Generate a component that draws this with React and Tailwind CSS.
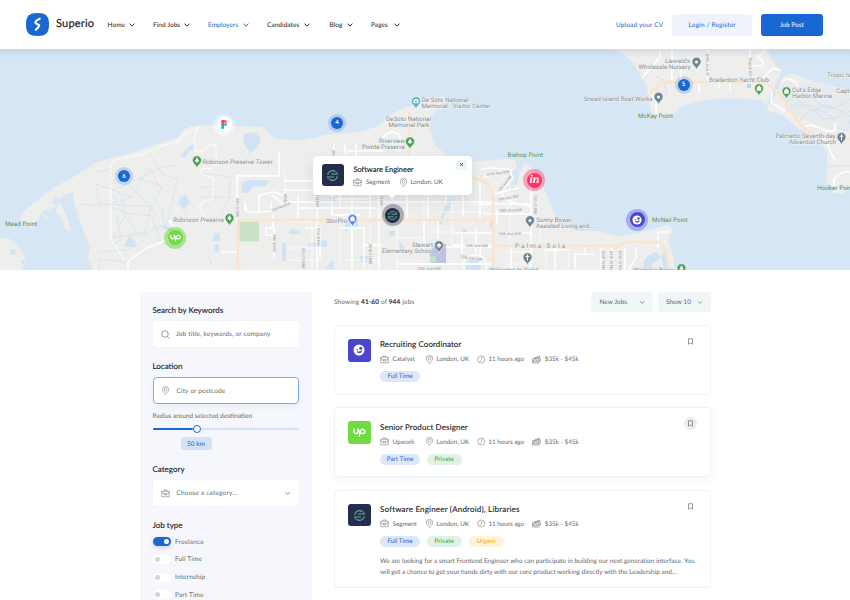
import React from "react";

const pinPath = "M0 2.8C-.6 -.8 -4.500 -1.800 -4.500 -5.200A4.500 4.500 0 0 1 4.500 -5.200C4.500 -1.800 .6 -.8 0 2.800Z";

const white = [
  "M237 175V221M237 176H279V152", "M245 211V202L247 212Q258 213 271 211V202M259 211V195L274 192L285 196M272 195L285 206",
  "M273 215V228H266V235H274M274 228V258M222 252H237", "M128 270V261L147 248L169 239L176 230L169 221H230",
  "M285 181H318M285 190H380M285 202H492M300 208H376M317 181V270M298 210V215M298 196V219M352 195V270M370 190V218M379 195V270M407 190V218M428 190V218M446 181V204M463 181V215M480 181V218",
  "M320 228V258M306 228H318M340 228H364V267M363 245H382M332 190V215H360M335 199H368M340 190V206",
  "M334 144V151M345 144V153M356 144V157M383 138Q390 128 400 135V152M347 151H383",
  "M480 170Q487 166 512 170M485 177Q505 172 510 171L513 178L502 190Q500 203 530 206M492 195Q508 190 518 188M480 204H531M455 233H493M483 214H531M493 210V233M497 224V210M453 245H494M505 233H531M531 176V270M511 245V270M476 229V252M462 236V253M430 247H493M410 264H492",
  "M465 270Q459 259 473 255Q489 254 486 270M397 264H480V248M438 220V238M424 219V248",
  "M642 78L660 57V51M648 92L656 100V116M672 50V80M681 60V80M708 50V82M750 48V81M719 82V88M730 80V91M699 82V93M752 66H762Q766 61 757 57L766 51M760 81L773 68L780 70M772 92L771 102L785 111M782 82Q790 74 798 86M803 127L811 125L827 131H835V123M824 137L835 161M834 188V179Q841 170 850 172",
  "M658 248V232H668M585 247V254H575M594 254H575V270M601 248V270M612 248V270M625 248V270M636 248V258L628 270M555 248V270M545 250H570",
];
const thinRoads = [
  "M285 172V210M289 222H312V270M340 225V265M370 225V270M397 225V270M424 178V214M452 180V245M510 180V245M540 220V242M546 250V270M569 252V270M620 252V270",
  "M288 248H318M288 260H320M395 238H422M395 250H420M430 232H455M440 205H490M440 212H490M345 260H380M505 252H531M505 264H531",
];

const labels = [
  ["Robinson Preserve Tower", 202.5, 164.2, 70, 1], ["Robinson Preserve", 173, 222.2, 51, 1],
  ["De Soto National", 421.5, 102, 47], ["Memorial - Visitor Center", 421.5, 108.2, 69],
  ["DeSoto National", 386, 121, 45], ["Memorial Park", 388.5, 127.2, 41],
  ["Riverview", 379, 142.5, 26], ["Pointe Preserve", 362, 148.7, 43],
  ["StorPro", 326, 223, 21], ["Stewart", 412, 246.5, 21], ["Elementary School", 382, 252.8, 51],
  ["Sunny Bower", 536, 221.5, 36], ["Assisted Living and...", 536, 227.8, 58],
  ["Welcome to Solid", 489, 272, 49],
  ["Liewald's", 665, 63, 25], ["Wholesale Nursery", 638.5, 69.2, 52],
  ["Snead Island Boat Works", 583.5, 101, 69], ["Bradenton Yacht Club", 709, 81.8, 60],
  ["Cut's Edge", 792, 92, 29], ["Harbor Marina", 792, 98.2, 40],
  ["Palmetto Seventh-day", 775.5, 138, 60], ["Adventist Church", 789, 144.2, 47],
  ["Tropic Island", 827, 77.2, 36], ["Captain's", 836, 93.2, 26], ["Warner's Bayou", 633, 271.8, 43],
];
const points = [
  ["Mead Point", 5, 225.5, 32], ["Bishop Point", 507.5, 157, 35.5], ["McKay Point", 638, 117.5, 35],
  ["McNeil Point", 652, 222, 35.5], ["Hooker Point", 817, 189.5, 37],
];
const streets = [
  ["99th St NW", 236, 198, 90, 19], ["99th St NW", 273, 234, 90, 18], ["10th Ave NW", 272, 212, -22, 20],
  ["21st Ave NW", 487, 176, -8, 23], ["19th Ave NW", 498, 201, -10, 21], ["18th Ave NW", 499, 212, -2, 23],
  ["16th Ave NW", 498, 235, 0, 23], ["15th Ave NW", 465, 247, 0, 23], ["12th Ave NW", 417, 270, 0, 24],
  ["15th Ave NW", 460, 258, 8, 22], ["14th Ave NW", 500, 192, -52, 19], ["75th St NW", 534, 195, 90, 19],
  ["69th Ave W", 706, 54, 90, 22], ["Tarpon Rd", 749, 57, 90, 19], ["65th St NW", 602, 251, 90, 21],
  ["64th St NW", 610, 251, 90, 21], ["63rd St NW", 619, 251, 90, 21], ["91st Ct NW", 317, 228, 90, 18],
  ["92nd St NW", 302, 248, 90, 20], ["86th Ct NW", 369, 244, 90, 20], ["83rd Ct NW", 380, 188, 90, 18],
  ["91st Ct NW", 316, 189, 90, 18], ["88th St", 284, 194, 90, 13], ["89th Ct", 332, 150, 90, 10],
];

function Pin({ x, y, c = "#6f8492", kind = "dot" }) {
  return (
    <g transform={`translate(${x} ${y})`}>
      <path d={pinPath} fill={c} stroke="#fff" strokeWidth=".5" />
      {kind === "dot" && <circle cy="-5" r="1.6" fill="#fff" />}
      {kind === "tree" && <path d="M0 -8.2L2 -4.4H.5V-2.8H-.5V-4.4H-2ZM-1.6 -5.6H1.6L2.2 -4H-2.2Z" fill="#fff" />}
      {kind === "cross" && <path d="M0 -8V-2M-1.8 -6H1.8" stroke="#fff" strokeWidth="1" />}
      {kind === "bag" && <path d="M-2 -6.2H2V-3H-2ZM-1 -6.2V-7Q0 -8.2 1 -7V-6.2" fill="#fff" stroke="#fff" strokeWidth=".5" />}
      {kind === "school" && <path d="M-2.8 -5.5L0 -7.2L2.8 -5.5L0 -3.9ZM-1.6 -4.4V-3.4L0 -2.6L1.6 -3.4V-4.4" fill="#fff" />}
      {kind === "camera" && <><path d="M-2.5 -6.8H-1L-.5 -7.6H.5L1 -6.8H2.5V-3.2H-2.5Z" fill="#fff" /><circle cy="-5" r="1" fill={c} /></>}
    </g>
  );
}

function MapArt() {
  return (
    <svg className="block h-full w-full" viewBox="0 49 850 221" fill="none" fontFamily="Roboto, sans-serif">
      <defs>
        <linearGradient id="topShade" x1="0" y1="0" x2="0" y2="1">
          <stop offset="0" stopColor="#7a94b4" stopOpacity=".2" />
          <stop offset="1" stopColor="#7a94b4" stopOpacity="0" />
        </linearGradient>
      </defs>
      <rect y="49" width="850" height="221" fill="#d6e6f4" />
      <g fill="#eeeeed">
        <path d="M93 270L88 258L90 248L82 228L78 215L74 201V193L67 193L60 199L55 197L52 203L57 206L50 209L43 211L37 221L30 229L28 222L20 221L24 211L35 202L55 187L75 176L97 162L112 158L135 152L160 143L178 137L183 130L192 126L205 125L262 127L270 134L276 139L305 140L325 135L345 133L360 132L378 126L395 112L418 103L445 96L449 98L440 108L432 115L429 128L435 145L452 160L472 162L505 159L515 160L517 167L508 176L510 186L517 184L520 172L525 163L535 171L545 191L555 215L562 226L578 231H598L618 236L638 233L668 225L673 230L668 241L673 255L675 270Z" />
        <path d="M0 238L10 239L20 248L26 261L22 270H0Z" />
        <path d="M613 48L632 61L643 78L648 91L650 108L655 120L672 115L682 106L705 100L728 98L762 100L769 111L782 115L798 128L815 138L827 151V181L833 193L842 194L850 190V90L815 82L792 73L783 77L776 94L763 112L770 96L781 73L765 48Z" />
        <path d="M59 202L67 216L71 232L64 228L63 220L56 211ZM43 213L50 221L45 219Z" />
      </g>
      <path d="M815 83L850 92V132L820 126L795 114L783 103L786 82Z" fill="#e8ebee" />
      <g fill="#d0e3f5">
        <path d="M244 134L254 132L261 138L257 148L250 153L243 143ZM180 156L192 144L195 148L188 152L185 158ZM180 197L186 195L190 203L184 209L179 203ZM129 235L136 243L135 247L124 247ZM241 184L249 180H269L266 186L252 187L249 193H242ZM215 234L220 232V241H212ZM214 244H219V252H215ZM208 255L212 263L211 265ZM159 225L173 227L177 234L169 231Z" />
        <path d="M282 243H286V261H282ZM308 243L327 240V247H308ZM345 221H358V229L352 227L345 232ZM360 256H369V262H360ZM389 231H395V236H389ZM325 268L333 260L334 270ZM291 228L300 231V234H289ZM447 200L455 197L449 211L444 215L442 225L439 224L443 211ZM466 270Q462 261 473 259Q483 260 480 270ZM462 229H467V233H462ZM398 240L405 247L401 251ZM490 222H494V228H490ZM644 270Q640 258 656 252L661 257L652 264V270ZM661 256L665 252L669 270H664ZM508 190L514 186L512 192ZM330 197H337V203H330Z" />
        <circle cx="13" cy="252" r="3" /><circle cx="23" cy="262" r="2" />
      </g>
      <path d="M655 76L663 80L667 96L657 95M790 76L779 92L784 99L798 90M785 112Q808 98 816 112T850 111M784 104Q802 86 816 101T850 99M800 120Q820 100 833 120T850 120M788 108L800 101L810 111L827 105L850 116M828 166H850" stroke="#cfe2f4" strokeWidth="1" />
      <path d="M97 172L112 169L111 189L95 184M96 188L99 203L113 205M78 204L103 206L132 197L149 167L158 184L179 205L187 214M148 151L163 175L178 179L165 230M111 207L127 213L152 216L160 242L187 252M132 197L112 190L128 184L162 167L178 165M122 195L125 215L113 238L145 232L151 205M138 178L162 186L153 207L110 204M113 194L121 211L140 236L164 225L162 209L151 193M111 184L125 181L141 197L157 216M98 252L128 250L145 240M95 259L129 262M99 270V260M200 173L230 177V197L221 214M197 187H212M197 197H230M245 149L239 158M251 153L245 160M117 216L121 239L112 246" stroke="#d3e2f0" strokeWidth=".8" />
      <g stroke="#f9f9f8" strokeWidth="1.1" strokeLinejoin="round">{thinRoads.map((d) => <path key={d} d={d} />)}</g>
      <g stroke="#fff" strokeWidth="1.5" strokeLinejoin="round" strokeLinecap="round">{white.map((d) => <path key={d} d={d} />)}</g>
      <path d="M125 261L111 240V164L115 160L143 154L161 146L178 142L185 134L198 128L194 139L195 151L203 151L208 145L216 145V165L211 169L202 168L201 174L213 178V199L202 202L199 208L207 220" stroke="#fff" strokeWidth="1.5" strokeDasharray="1.6 1.1" />
      <g stroke="#fbe4cb" strokeWidth="2.4" strokeLinejoin="round">
        <path d="M238 270V220H493M409 112V160M470 177Q493 181 493 198V270M493 246H620L625 242H660Q667 247 670 270M648 95L662 82H760Q773 84 782 98L798 121Q809 136 825 137L850 139" />
      </g>
      <path d="M239.500 222H259V241.500H239.500Z" fill="#cae2ca" />
      <path d="M430 251L436 244H446V263H430Z" fill="#bec3e3" /><path d="M430 256H436V263H430Z" fill="#bfe3c4" />
      <rect x="747" y="84" width="4" height="4" fill="#a9dfeb" />
      <g fill="#a0a0a0" fontSize="4" stroke="#eeeeed" strokeWidth=".7" paintOrder="stroke">
        {streets.map(([t, x, y, r, w], i) => <text key={i} transform={`translate(${x} ${y}) rotate(${r})`} textLength={w} lengthAdjust="spacingAndGlyphs">{t}</text>)}
      </g>
      <g fill="#878c90" fontSize="6.200" stroke="#f3f5f6" strokeWidth=".9" paintOrder="stroke">
        {labels.map(([t, x, y, w, it]) => <text key={t} x={x} y={y} textLength={w} lengthAdjust="spacingAndGlyphs" fontStyle={it ? "italic" : "normal"}>{t}</text>)}
        <text x="515" y="248" fontSize="6.500" textLength="50">Palma Sola</text>
      </g>
      <g fill="#4b8a52" fontSize="6.200" stroke="#e9f1f3" strokeWidth=".7" paintOrder="stroke">
        {points.map(([t, x, y, w]) => <text key={t} x={x} y={y} textLength={w} lengthAdjust="spacingAndGlyphs">{t}</text>)}
      </g>
      <Pin x={197} y={165.500} c="#4f9d58" kind="tree" />
      <Pin x={229.500} y={223.300} c="#4f9d58" kind="tree" />
      <Pin x={410} y={146.700} c="#4f9d58" kind="tree" />
      <Pin x={681.500} y={273.500} c="#4f9d58" kind="tree" />
      <Pin x={759} y={93.400} c="#4aa356" kind="bag" />
      <Pin x={786.500} y={96.400} c="#4aa356" kind="bag" />
      <Pin x={416} y={106.400} c="#4cb3c9" kind="camera" />
      <Pin x={352.500} y={224} c="#5a87e8" kind="bag" />
      <Pin x={439} y={250.400} kind="school" />
      <Pin x={530} y={225.500} /><Pin x={527.500} y={262.500} kind="cross" />
      <Pin x={696.500} y={67} /><Pin x={658.500} y={102} /><Pin x={841.500} y={142.200} kind="cross" />
      <rect y="49" width="850" height="9" fill="url(#topShade)" />
    </svg>
  );
}

function SegmentMark({ className }) {
  return (
    <svg className={className} viewBox="0 0 24 24" fill="none" stroke="#62b58d" strokeWidth="2" strokeLinecap="round">
      <path d="M4.500 7A9 9 0 0 1 17 4.500M19.500 17A9 9 0 0 1 7 19.500M10 9.300H21.500M2.500 14.700H14M20.500 14Q20.500 16 19.500 17M3.500 10Q3.500 8 4.500 7" />
      <circle cx="20" cy="6.500" r=".4" /><circle cx="4" cy="17.500" r=".4" />
    </svg>
  );
}

function CatalystMark({ className }) {
  return (
    <svg className={className} viewBox="0 0 24 24">
      <circle cx="12" cy="12" r="11" fill="#fff" />
      <circle cx="15.500" cy="8.500" r="3" fill="#4a44cf" /><circle cx="8.500" cy="11.500" r="1.500" fill="#4a44cf" />
      <path d="M7 14.500Q13 16.500 18.500 12Q18 18 13 18.500Q8.500 18.500 7 14.500Z" fill="#4a44cf" />
    </svg>
  );
}

function UpMark({ className }) {
  return (
    <svg className={className} viewBox="0 0 26 18" fill="none" stroke="#fff" strokeWidth="2.900" strokeLinecap="round" strokeLinejoin="round">
      <path d="M2 2V7Q2 11 6 11T10 7V2Q12 8 16 10.500M12.500 16L15 6.500Q16 2.500 19.500 2.500T24 6.800T19.500 11Q17 11 14 8" />
    </svg>
  );
}

function Chevron({ className }) {
  return <svg className={className} viewBox="0 0 8 5" fill="none" stroke="currentColor" strokeWidth="1.300" strokeLinecap="round" strokeLinejoin="round"><path d="M1 1L4 4L7 1" /></svg>;
}

function Briefcase({ className = "h-[9px] w-[9px]" }) {
  return (
    <svg className={className} viewBox="0 0 18 18" fill="none" stroke="currentColor" strokeWidth="1" strokeLinejoin="round">
      <path d="M1.500 4.500H16.500V15.500H1.500ZM6 4.500V2H12V4.500M1.500 5.500L3 9L7 10.500M16.500 5.500L15 9L11 10.500M7 9H11V12H7Z" />
    </svg>
  );
}

function Place({ className = "h-[9px] w-[9px]" }) {
  return (
    <svg className={className} viewBox="0 0 18 18" fill="none" stroke="currentColor" strokeWidth="1">
      <path d="M9 17C7.500 13.500 2.500 11.500 2.500 7A6.500 6.200 0 0 1 15.500 7C15.500 11.500 10.500 13.500 9 17Z" /><circle cx="9" cy="7" r="3" />
    </svg>
  );
}

function Clock() {
  return (
    <svg className="h-[9px] w-[9px]" viewBox="0 0 18 18" fill="none" stroke="currentColor" strokeWidth="1">
      <circle cx="8.500" cy="9" r="7" /><path d="M9.500 4V9L6.500 13" />
    </svg>
  );
}

function Money() {
  return (
    <svg className="h-[9px] w-[9px]" viewBox="0 0 18 18" fill="none" stroke="currentColor" strokeWidth="1.100">
      <path d="M1 7.500H14V16H1ZM3 7L15 2L17.500 11L14 13M5 7L13.500 4.500L14.500 7" /><circle cx="7.500" cy="11.700" r="2.300" /><path d="M3 9.500V14M12 9.500V14" />
    </svg>
  );
}

function Bookmark() {
  return <svg className="h-[7px] w-[7px]" viewBox="0 0 14 14" fill="none" stroke="#6c6f73" strokeWidth="1.400"><path d="M3 1.500H11V12.500L7 9.500L3 12.500Z" /></svg>;
}

const nav = [
  ["Home", "w-[45.5px]", "gap-[4px]"], ["Find Jobs", "w-[55px]", "gap-[4px]"], ["Employers", "w-[59px]", "gap-[5px]"],
  ["Candidates", "w-[62.500px]", "gap-[5px]"], ["Blog", "w-[41.500px]", "gap-[5px]"], ["Pages", "w-[40px]", "gap-[6px]"],
];

function Header() {
  return (
    <header className="flex h-[49px] items-center bg-white pr-[27px] pl-[26px] text-[#202124]">
      <svg className="h-[23px] w-[23px]" viewBox="0 0 23 23">
        <path d="M11.500 0C20 0 23 3 23 11.500S20 23 11.500 23S0 20 0 11.500S3 0 11.500 0Z" fill="#1967d2" />
        <path d="M13.800 5.800Q9.500 7.800 9.400 9.600Q9.500 10.400 13 11.900Q14 12.800 9.800 16.800" fill="none" stroke="#fff" strokeWidth="2.100" strokeLinecap="round" strokeLinejoin="round" />
      </svg>
      <span className="ml-[7px] w-[51.500px] text-[11px] tracking-[0.200px] [-webkit-text-stroke:0.200px_#202124]">Superio</span>
      <nav className="flex text-[6.500px]">
        {nav.map(([label, w, gap], i) => (
          <div key={label} className={`flex ${w} ${gap} items-center whitespace-nowrap ${i === 2 ? "text-[#1967d2]" : ""}`}>
            <span className="mt-[2px] tracking-[0.050px]">{label}</span><Chevron className="mt-px h-[4px] w-[6px]" />
          </div>
        ))}
      </nav>
      <div className="ml-auto flex items-center text-[6.500px] text-[#1967d2]">
        <span className="mt-[2px] mr-[9px] tracking-[0.150px]">Upload your CV</span>
        <span className="mr-[8.300px] flex h-[22px] w-[80px] items-center justify-center rounded-[3px] bg-[#eff3fc] pt-[2px] tracking-[0.150px]">Login / Register</span>
        <span className="flex h-[22px] w-[62.500px] items-center justify-center rounded-[3px] bg-[#1967d2] pt-[2px] text-white">Job Post</span>
      </div>
    </header>
  );
}

const clusterCls = "absolute flex h-[18px] w-[18px] items-center justify-center rounded-full bg-[#1967d2]/20";
function Cluster({ pos, n }) {
  return <div className={`${clusterCls} ${pos}`}><span className="flex h-[12px] w-[12px] items-center justify-center rounded-full bg-[#1967d2] text-[6px] font-bold text-white">{n}</span></div>;
}

function JobMap() {
  return (
    <section className="relative h-[221px] overflow-hidden">
      <MapArt />
      <Cluster pos="left-[115px] top-[118px]" n="6" />
      <Cluster pos="left-[328px] top-[64.500px]" n="4" />
      <Cluster pos="left-[674.500px] top-[26.500px]" n="5" />
      <div className="absolute top-[64.500px] left-[213px] flex h-[22px] w-[22px] items-center justify-center rounded-full bg-white/40">
        <span className="flex h-[15px] w-[15px] items-center justify-center rounded-full bg-white">
          <svg className="h-[9px] w-[6px]" viewBox="0 0 12 18"><path d="M3 0H6V6H3A3 3 0 0 1 3 0Z" fill="#f24e1e" /><path d="M6 0H9A3 3 0 0 1 9 6H6Z" fill="#ff7262" /><path d="M3 6H6V12H3A3 3 0 0 1 3 6Z" fill="#a259ff" /><circle cx="9" cy="9" r="3" fill="#1abcfe" /><path d="M3 12H6V15A3 3 0 1 1 3 12Z" fill="#0acf83" /></svg>
        </span>
      </div>
      <div className="absolute top-[177.500px] left-[164.400px] flex h-[22px] w-[22px] items-center justify-center rounded-full bg-[#6fda44]/55">
        <span className="flex h-[15px] w-[15px] items-center justify-center rounded-full bg-[#6fda44]"><UpMark className="h-[8px] w-[11px]" /></span>
      </div>
      <div className="absolute top-[155.400px] left-[381.500px] flex h-[22px] w-[22px] items-center justify-center rounded-full bg-[#252c4d]/35">
        <span className="flex h-[15px] w-[15px] items-center justify-center rounded-full bg-[#252c4d]"><SegmentMark className="h-[11px] w-[11px]" /></span>
      </div>
      <div className="absolute top-[120.400px] left-[523.400px] flex h-[22px] w-[22px] items-center justify-center rounded-full bg-[#ff3366]/40">
        <span className="flex h-[15px] w-[15px] items-center justify-center rounded-full bg-[#ff3366] pb-[2px] font-['Liberation_Serif',serif] text-[12px] leading-none font-bold text-white italic">in</span>
      </div>
      <div className="absolute top-[159.500px] left-[626.400px] flex h-[22px] w-[22px] items-center justify-center rounded-full bg-[#4a44cf]/35">
        <span className="flex h-[15px] w-[15px] items-center justify-center rounded-full bg-[#4a44cf]"><CatalystMark className="h-[10px] w-[10px]" /></span>
      </div>
      <div className="absolute top-[106.500px] left-[313.400px] flex h-[39.500px] w-[158.500px] items-center rounded-[4px] bg-white pl-[8.500px] shadow-[0_6px_12px_rgba(64,79,104,0.15)]">
        <span className="absolute top-[38px] left-[75px] border-x-[4px] border-t-[5px] border-x-transparent border-t-white" />
        <span className="flex h-[22px] w-[22px] items-center justify-center rounded-[3px] bg-[#252c4d]"><SegmentMark className="h-[13px] w-[13px]" /></span>
        <div className="ml-[9.500px] flex flex-col gap-[4px] pt-[1.500px] whitespace-nowrap">
          <span className="text-[7.500px] leading-[8px] tracking-[-0.020px] text-[#202124] [-webkit-text-stroke:0.150px_#202124]">Software Engineer</span>
          <div className="flex items-center text-[6.300px] leading-[8px] text-[#696969]">
            <Briefcase /><span className="mt-px ml-[3.500px] w-[33px]">Segment</span><Place /><span className="mt-px ml-[2.500px] tracking-[-0.030px]">London, UK</span>
          </div>
        </div>
        <span className="absolute top-[4px] right-[5px] flex h-[10.500px] w-[10.500px] items-center justify-center rounded-[3px] bg-[#edf4f8]">
          <svg className="h-[3px] w-[3px]" viewBox="0 0 6 6" stroke="#333" strokeWidth="1.500"><path d="M0 0L6 6M6 0L0 6" /></svg>
        </span>
      </div>
    </section>
  );
}

const sideTitle = "h-[16px] text-[8px] leading-[16.500px] text-[#202124] [-webkit-text-stroke:0.120px_#202124]";
const toggles = ["Freelance", "Full Time", "Internship", "Part Time"];

function Sidebar() {
  return (
    <aside className="h-[320px] w-[172.500px] shrink-0 rounded-[4px] bg-[#f5f7fc] px-[13px] pt-[10px] text-[6.500px] text-[#696969]">
      <h3 className={sideTitle}>Search by Keywords</h3>
      <div className="mt-[3.400px] flex h-[25.500px] items-center rounded-[3px] bg-white pl-[8.500px] shadow-[0_0_0_0.500px_#f0f2f8]">
        <svg className="h-[9px] w-[9px]" viewBox="0 0 18 18" fill="none" stroke="currentColor" strokeWidth="1.300"><circle cx="8" cy="8" r="6.500" /><path d="M13 13L17 17" /></svg>
        <span className="mt-[2px] ml-[6px] tracking-[0.150px]">Job title, keywords, or company</span>
      </div>
      <h3 className={`${sideTitle} mt-[11px]`}>Location</h3>
      <div className="mt-[3px] flex h-[27px] items-center rounded-[4px] border border-[#78aaf0] bg-white pl-[7.500px] shadow-[0_3px_6px_rgba(25,103,210,0.06)]">
        <Place /><span className="mt-[2px] ml-[6.500px] tracking-[0.120px]">City or postcode</span>
      </div>
      <p className="mt-[5px] h-[14px] leading-[15.500px]">Radius around selected destination</p>
      <div className="mt-[1.500px] flex h-[9px] items-center">
        <span className="h-[2px] w-[40px] rounded-full bg-[#1967d2]" />
        <span className="h-[8px] w-[8px] rounded-full border-[1.500px] border-[#1967d2] bg-white" />
        <span className="h-[2px] flex-1 rounded-full bg-[#d4e1f6]" />
      </div>
      <div className="mt-[3.400px] ml-[28px] flex h-[13.600px] w-[31px] items-center justify-center rounded-[3px] bg-[#d4e1f6] pt-[2px] text-[#1967d2]">50 km</div>
      <h3 className={`${sideTitle} mt-[10.500px]`}>Category</h3>
      <div className="mt-[3.500px] flex h-[25.500px] items-center rounded-[3px] bg-white pr-[9px] pl-[8px] shadow-[0_0_0_0.500px_#f0f2f8]">
        <Briefcase /><span className="mt-[2px] ml-[7px] tracking-[0.180px]">Choose a category...</span><Chevron className="mt-px ml-auto h-[3px] w-[5px]" />
      </div>
      <h3 className={`${sideTitle} mt-[11px]`}>Job type</h3>
      {toggles.map((t, i) => (
        <div key={t} className="flex h-[17.700px] items-center">
          <span className={`flex h-[9px] w-[18px] items-center rounded-full px-[2px] ${i ? "bg-white" : "justify-end bg-[#1967d2] shadow-[0_2px_5px_rgba(64,79,104,0.2)]"}`}>
            <span className={`h-[5px] w-[5px] rounded-full ${i ? "bg-[#d3d5dc]" : "bg-white"}`} />
          </span>
          <span className="mt-[1.500px] ml-[4.500px] tracking-[0.150px]">{t}</span>
        </div>
      ))}
    </aside>
  );
}

const tagStyle = {
  "Full Time": "w-[40px] bg-[#dce8f9] text-[#1967d2]",
  "Part Time": "w-[40px] bg-[#dce8f9] text-[#1967d2]",
  Private: "w-[35.500px] bg-[#e0f2e5] text-[#34a853]",
  Urgent: "w-[35.500px] bg-[#fef2d9] text-[#f9ab00]",
};

const jobs = [
  { title: "Recruiting Coordinator", company: "Catalyst", tags: ["Full Time"], size: "h-[70px]", logoBg: "bg-[#4a44cf]", logo: <CatalystMark className="h-[12px] w-[12px]" />, track: "tracking-[0.080px]" },
  { title: "Senior Product Designer", company: "Upwork", tags: ["Part Time", "Private"], size: "h-[70px] mt-[12.400px] shadow-[0_3px_7px_rgba(64,79,104,0.06)]", logoBg: "bg-[#6fda44]", logo: <UpMark className="h-[9px] w-[13px]" />, active: true, track: "tracking-[0.110px]" },
  { title: "Software Engineer (Android), Libraries", company: "Segment", tags: ["Full Time", "Private", "Urgent"], size: "h-[98.500px] mt-[12.400px]", logoBg: "bg-[#252c4d]", logo: <SegmentMark className="h-[13px] w-[13px]" />, text: true, track: "tracking-[0.190px]" },
];

function Job({ job }) {
  return (
    <article className={`flex rounded-[4px] border border-[#f1f2f5] bg-white pt-[13px] pl-[13px] ${job.size}`}>
      <span className={`flex h-[22.500px] w-[22.500px] shrink-0 items-center justify-center rounded-[3px] ${job.logoBg}`}>{job.logo}</span>
      <div className="-mt-[0.800px] ml-[9.500px] flex-1 whitespace-nowrap">
        <h4 className={`h-[12px] text-[8px] leading-[13px] text-[#202124] [-webkit-text-stroke:0.120px_#202124] ${job.track}`}>{job.title}</h4>
        <div className="mt-[4px] flex h-[10px] items-center text-[6.300px] text-[#696969]">
          <Briefcase /><span className="mt-[1.500px] ml-[3.500px] w-[32.500px]">{job.company}</span>
          <Place /><span className="mt-[1.500px] ml-[2.500px] w-[40.300px]">London, UK</span>
          <Clock /><span className="mt-[1.500px] ml-[2.700px] w-[43.300px] tracking-[-0.050px]">11 hours ago</span>
          <Money /><span className="mt-[1.500px] ml-[4px]">$35k - $45k</span>
        </div>
        <div className="mt-[7px] flex gap-[6.500px] text-[6.300px]">
          {job.tags.map((t) => <span key={t} className={`flex h-[11px] items-center justify-center rounded-full pt-px ${tagStyle[t]}`}>{t}</span>)}
        </div>
        {job.text && (
          <p className="mt-[10px] text-[6.500px] leading-[10.700px] tracking-[-0.015px] text-[#696969]">
            We are looking for a smart Frontend Engineer who can participate in building our next generation interface. You<br />
            will get a chance to get your hands dirty with our core product working directly with the Leadership and...
          </p>
        )}
      </div>
      <span className={`-mt-[4.500px] -ml-[26px] mr-[12.500px] flex h-[13.500px] w-[13.500px] shrink-0 items-center justify-center rounded-full ${job.active ? "bg-[#ececf1]" : ""}`}><Bookmark /></span>
    </article>
  );
}

export default function App() {
  return (
    <div className="h-[600px] w-[850px] overflow-hidden bg-white font-['Lato',sans-serif] [text-rendering:geometricPrecision]">
      <Header />
      <JobMap />
      <main className="flex gap-[22px] pt-[22px] pl-[139.500px]">
        <Sidebar />
        <div className="w-[376.500px]">
          <div className="flex h-[20px] items-center text-[6.500px] text-[#696969]">
            <span className="mt-[2px] mr-auto tracking-[0.120px]">Showing <span className="text-[#202124] [-webkit-text-stroke:0.150px_#202124]">41-60</span> of <span className="text-[#202124] [-webkit-text-stroke:0.150px_#202124]">944</span> jobs</span>
            <span className="flex h-[20px] w-[62px] items-center justify-between rounded-[4px] bg-[#f0f5f7] px-[8.500px]"><span className="mt-[2px]">New Jobs</span><Chevron className="h-[3px] w-[4.500px]" /></span>
            <span className="ml-[4.500px] flex h-[20px] w-[53px] items-center justify-between rounded-[4px] bg-[#f0f5f7] px-[8.500px]"><span className="mt-[2px]">Show 10</span><Chevron className="h-[3px] w-[4.500px]" /></span>
          </div>
          <div className="pt-[13px]">{jobs.map((j) => <Job key={j.title} job={j} />)}</div>
        </div>
      </main>
    </div>
  );
}
